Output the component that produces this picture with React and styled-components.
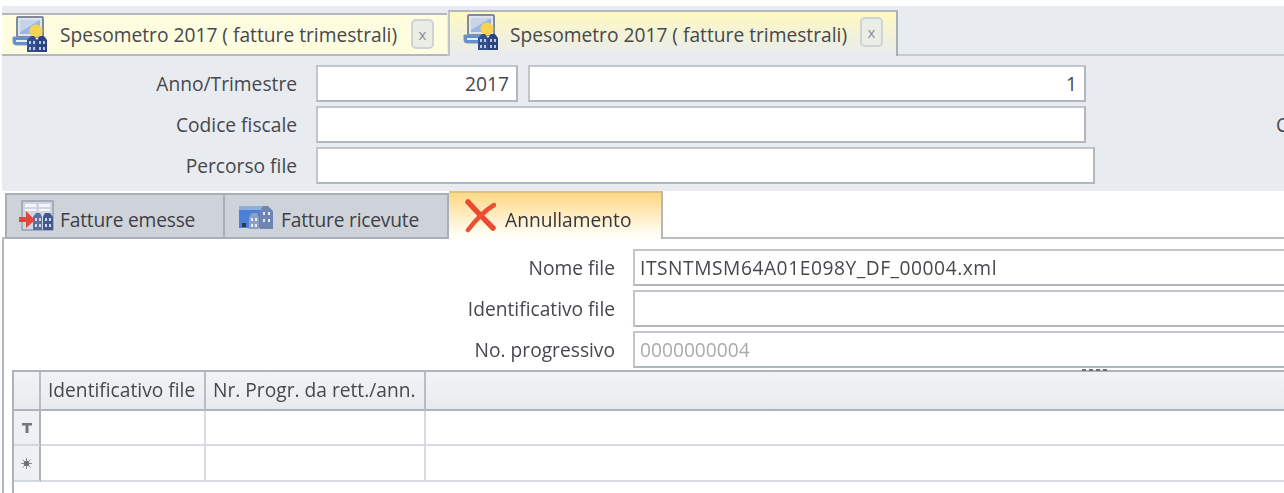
import React from 'react'
import styled, { createGlobalStyle } from 'styled-components'

const Global = createGlobalStyle`
  html, body { margin: 0; padding: 0; background: #fff; }
  * { box-sizing: border-box; }
`
const Page = styled.div`
  width: 1284px;
  height: 493px;
  overflow: hidden;
  padding: 6px 0 0 2px;
  font-family: "Open Sans", "Noto Sans", sans-serif;
  font-size: 19.2px;
  color: #46484d;
  filter: blur(0.5px);
`
const TabStrip = styled.div`
  height: 50px;
  display: flex;
  align-items: flex-end;
  background: #e8ebf0;
  border-bottom: 2px solid #c6cad1;
`
const DocTab = styled.div`
  display: flex;
  align-items: center;
  flex: none;
  width: ${p => p.$width}px;
  height: ${p => (p.$active ? 46 : 43)}px;
  margin-bottom: -2px;
  margin-left: ${p => (p.$active ? 1 : 0)}px;
  padding: 0 0 ${p => (p.$active ? 4 : 1)}px ${p => (p.$active ? 13 : 10)}px;
  gap: ${p => (p.$active ? 11 : 12)}px;
  white-space: nowrap;
  background: ${p => (p.$active ? 'linear-gradient(#fff9c0, #e8ebf0)' : '#fffde0')};
  border-top: 2px solid #b3b8c0;
  border-bottom: ${p => (p.$active ? 'none' : '2px solid #b3b8c0')};
  border-right: ${p => (p.$active ? '2px solid #a9afb9' : 'none')};
  border-left: ${p => (p.$active ? '2px solid #c0c4ca' : 'none')};
`
const DocTabTitle = styled.span`
  flex: none;
  width: 337px;
  padding-top: ${p => (p.$active ? 4 : 0)}px;
`
const CloseBox = styled.span`
  width: 23px;
  height: 30px;
  margin-left: 2px;
  flex: none;
  display: flex;
  align-items: center;
  justify-content: center;
  font-size: 15px;
  color: #8b8f92;
  background: #e9eee6;
  border: 2px solid #cfd3d6;
  border-radius: 5px;
`
const FormPanel = styled.div`
  height: 135px;
  background: #e8ebf0;
  padding-top: 9px;
  display: flex;
  flex-direction: column;
  gap: 4px;
`
const FormRow = styled.div`
  display: flex;
  align-items: center;
  height: 37px;
  white-space: nowrap;
`
const FormLabel = styled.label`
  width: 295px;
  flex: none;
  text-align: right;
  margin-right: 19px;
`
const Field = styled.div`
  flex: none;
  width: ${p => p.$width}px;
  height: 37px;
  margin-right: ${p => p.$gap || 0}px;
  line-height: 33px;
  padding: 0 ${p => (p.$right ? 7 : 5)}px;
  text-align: ${p => (p.$right ? 'right' : 'left')};
  letter-spacing: ${p => p.$spacing || 0}px;
  background: #fff;
  border: 2px solid #b2b7bf;
  border-left-color: #c2c6cc;
  border-top-color: #c2c6cc;
  color: ${p => (p.$muted ? '#a9abae' : 'inherit')};
`
const ClippedLabel = styled.span`
  margin-left: 190px;
`
const SubTabs = styled.div`
  height: 48px;
  display: flex;
  align-items: flex-end;
  padding-left: 3px;
  background: #fff;
  border-bottom: 2px solid #b9bdc5;
`
const SubTab = styled.div`
  flex: none;
  display: flex;
  align-items: center;
  gap: ${p => p.$gap}px;
  width: ${p => p.$width}px;
  height: ${p => (p.$active ? 48 : 46)}px;
  margin-bottom: -2px;
  padding-left: ${p => p.$pad}px;
  white-space: nowrap;
  color: ${p => (p.$active ? '#35373c' : '#3e4045')};
  background: ${p => (p.$active ? 'linear-gradient(#ffd884, #fffef6 90%)' : '#ced3da')};
  border: 2px solid ${p => (p.$active ? '#dcc486' : '#a9afb9')};
  border-left-width: ${p => (p.$first ? 2 : 0)}px;
  border-bottom: ${p => (p.$active ? 'none' : '2px solid #a9afb9')};
  border-right-color: ${p => (p.$active ? '#b5b7b0' : '#a9afb9')};
`
const SubTabLabel = styled.span`
  padding-top: ${p => (p.$active ? 6 : 7)}px;
  letter-spacing: ${p => (p.$narrow ? -0.2 : 0)}px;
`
const Body = styled.div`
  height: 255px;
  padding: 10px 0 0 8px;
  border-left: 2px solid #b2b7bf;
`
const DetailRows = styled.div`
  display: flex;
  flex-direction: column;
  gap: 4px;
`
const DetailRow = styled.div`
  display: flex;
  align-items: center;
  height: 37px;
  white-space: nowrap;
`
const DetailLabel = styled.label`
  width: 603px;
  flex: none;
  text-align: right;
  margin-right: 18px;
`
const Splitter = styled.div`
  position: absolute;
  right: 177px;
  top: -3px;
  display: flex;
  gap: 3px;
  i {
    width: 4px;
    height: 2px;
    background: #6c6f75;
  }
`
const Grid = styled.div`
  position: relative;
  margin-top: 2px;
  display: grid;
  grid-template-columns: 27px 165px 220px 1fr;
  grid-template-rows: 39px 35px 36px;
  height: 130px;
  border-top: 2px solid #adb2bc;
  border-left: 2px solid #adb2bc;
`
const HeadCell = styled.div`
  background: linear-gradient(#f2f3f5, #e8ebee);
  border-bottom: 2px solid #adb2bc;
  border-right: ${p => (p.$last ? 'none' : '2px solid #b7bcc5')};
  padding-left: ${p => p.$pad || 6}px;
  line-height: 36px;
  white-space: nowrap;
  overflow: hidden;
`
const RowHead = styled.div`
  background: #eef0f3;
  border-bottom: 2px solid #d3d7e0;
  border-right: 2px solid #adb2bc;
  display: flex;
  align-items: center;
  justify-content: center;
`
const Cell = styled.div`
  background: #fff;
  border-bottom: 2px solid #d8dbe3;
  border-right: ${p => (p.$last ? 'none' : '2px solid #d8dbe3')};
`

const MonitorIcon = () => (
  <svg width="36" height="36" viewBox="0 0 36 36">
    <rect x="5" y="1" width="26" height="20" rx="1" fill="#dfe4ec" stroke="#7f8a9b" strokeWidth="2" />
    <rect x="8" y="4" width="20" height="14" fill="#9db6de" />
    <path d="M8 4h20L8 16z" fill="#c6d4ea" />
    <path d="M1 21h18v8H4q-3 0-3-3z" fill="#5f8fd6" stroke="#8593a8" />
    <path d="M4 24h11v2H4z" fill="#e6edf7" />
    <circle cx="24" cy="15" r="6.5" fill="#f6d451" />
    <path d="M15 36V24l4-4h3l3 4v12z" fill="#33508c" />
    <path d="M25 36V24l3-4h4l3 4v12z" fill="#2b447e" />
    <path d="M17 25h2v3h-2zM21 25h2v3h-2zM17 31h2v3h-2zM21 31h2v3h-2zM27 25h2v3h-2zM31 25h2v3h-2zM27 31h2v3h-2zM31 31h2v3h-2z" fill="#b8c8e6" />
  </svg>
)

const SentIcon = () => (
  <svg width="36" height="32" viewBox="0 0 36 32">
    <rect x="3" y="1" width="31" height="29" fill="#cfd6e0" stroke="#7d8798" />
    <path d="M6 4h11v3H6zM20 4h11v3H20zM6 9h11v2H6zM20 9h11v2H20z" fill="#f4f6f9" />
    <path d="M14 30V17l3-4h4l2 4v13z" fill="#5a6f9e" />
    <path d="M24 30V17l2-4h5l3 4v13z" fill="#42598f" />
    <path d="M16 18h2v3h-2zM20 18h2v3h-2zM16 24h2v3h-2zM20 24h2v3h-2zM26 18h2v3h-2zM30 18h2v3h-2zM26 24h2v3h-2zM30 24h2v3h-2z" fill="#cdd8ec" />
    <path d="M0 17h7v-6l9 9-9 8v-6H0z" fill="#e5463c" />
  </svg>
)

const ReceivedIcon = () => (
  <svg width="36" height="26" viewBox="0 0 36 26">
    <path d="M1 3h24v22H1z" fill="#4d7fd8" />
    <path d="M1 3h24v4H1z" fill="#8eaee2" />
    <rect x="4" y="20" width="4" height="4" fill="#2c3a50" />
    <path d="M11 26V14l3-4h5l2 4v12z" fill="#8ea0c2" />
    <path d="M22 26V8l3-5h5l5 5v18z" fill="#6f86b2" />
    <path d="M13 15h2v3h-2zM17 15h2v3h-2zM13 21h2v3h-2zM17 21h2v3h-2zM25 9h2v3h-2zM30 9h2v3h-2zM25 16h2v3h-2zM30 16h2v3h-2z" fill="#e3e9f5" />
  </svg>
)

const CrossIcon = () => (
  <svg width="32" height="34" viewBox="0 0 32 34">
    <path d="M4 3 Q15 15 29 29" stroke="#ea4a30" strokeWidth="5.5" fill="none" strokeLinecap="round" />
    <path d="M30 6 Q17 14 4 31" stroke="#ec4f33" strokeWidth="4.5" fill="none" strokeLinecap="round" />
  </svg>
)

const FilterIcon = () => (
  <svg width="10" height="10" viewBox="0 0 10 10">
    <path d="M0 0h10v2.5H6.5V10h-3V2.5H0z" fill="#73777d" />
  </svg>
)

const StarIcon = () => (
  <svg width="11" height="11" viewBox="0 0 11 11">
    <path d="M5.5 0v11M0 5.5h11M1.5 1.5l8 8M9.5 1.5l-8 8" stroke="#8b8e94" strokeWidth="1" />
    <circle cx="5.5" cy="5.5" r="2.8" fill="#6f7278" />
  </svg>
)

const DocumentTab = ({ active, width }) => (
  <DocTab $active={active} $width={width}>
    <MonitorIcon />
    <DocTabTitle $active={active}>Spesometro 2017 ( fatture trimestrali)</DocTabTitle>
    <CloseBox>x</CloseBox>
  </DocTab>
)

export default function App() {
  return (
    <Page>
      <Global />
      <TabStrip>
        <DocumentTab width={445} />
        <DocumentTab active width={450} />
      </TabStrip>
      <FormPanel>
        <FormRow>
          <FormLabel>Anno/Trimestre</FormLabel>
          <Field $width={202} $gap={10} $right>2017</Field>
          <Field $width={558} $right>1</Field>
        </FormRow>
        <FormRow>
          <FormLabel>Codice fiscale</FormLabel>
          <Field $width={770} />
          <ClippedLabel>C</ClippedLabel>
        </FormRow>
        <FormRow>
          <FormLabel>Percorso file</FormLabel>
          <Field $width={779} />
        </FormRow>
      </FormPanel>
      <SubTabs>
        <SubTab $first $width={220} $pad={12} $gap={5}><SentIcon /><SubTabLabel $narrow>Fatture emesse</SubTabLabel></SubTab>
        <SubTab $width={224} $pad={13} $gap={7}><ReceivedIcon /><SubTabLabel $narrow>Fatture ricevute</SubTabLabel></SubTab>
        <SubTab $active $width={214} $pad={15} $gap={9}><CrossIcon /><SubTabLabel $active>Annullamento</SubTabLabel></SubTab>
      </SubTabs>
      <Body>
        <DetailRows>
          <DetailRow>
            <DetailLabel>Nome file</DetailLabel>
            <Field $width={700} $spacing={0.55}>ITSNTMSM64A01E098Y_DF_00004.xml</Field>
          </DetailRow>
          <DetailRow>
            <DetailLabel>Identificativo file</DetailLabel>
            <Field $width={700} />
          </DetailRow>
          <DetailRow>
            <DetailLabel>No. progressivo</DetailLabel>
            <Field $width={700} $muted>0000000004</Field>
          </DetailRow>
        </DetailRows>
        <Grid>
          <Splitter><i /><i /><i /><i /></Splitter>
          <HeadCell />
          <HeadCell $pad={7}>Identificativo file</HeadCell>
          <HeadCell $pad={7}>Nr. Progr. da rett./ann.</HeadCell>
          <HeadCell $last />
          <RowHead><FilterIcon /></RowHead>
          <Cell />
          <Cell />
          <Cell $last />
          <RowHead><StarIcon /></RowHead>
          <Cell />
          <Cell />
          <Cell $last />
        </Grid>
      </Body>
    </Page>
  )
}
